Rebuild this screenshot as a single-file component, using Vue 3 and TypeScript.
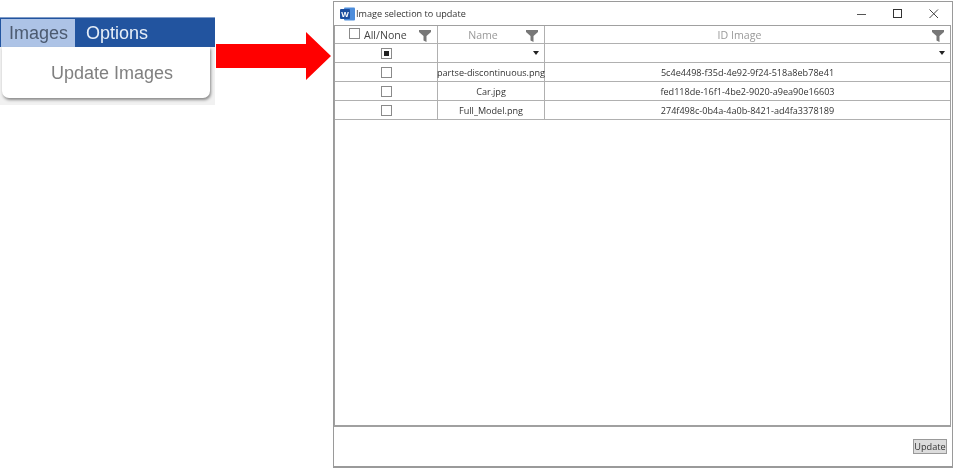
<script setup lang="ts">
interface Row { name: string; id: string }
const rows: Row[] = [
  { name: 'partse-discontinuous.png', id: '5c4e4498-f35d-4e92-9f24-518a8eb78e41' },
  { name: 'Car.jpg', id: 'fed118de-16f1-4be2-9020-a9ea90e16603' },
  { name: 'Full_Model.png', id: '274f498c-0b4a-4a0b-8421-ad4fa3378189' },
]
</script>

<template>
  <div class="page">
    <div class="shot">
      <div class="menubar">
        <div class="menu active">Images</div>
        <div class="menu">Options</div>
      </div>
      <div class="popup">Update Images</div>
    </div>

    <svg class="arrow" width="116" height="50" viewBox="0 0 116 50">
      <path d="M0 12H90V0L115 24L90 48V36H0Z" fill="#ff0000" />
    </svg>

    <div class="window">
      <div class="titlebar">
        <svg class="word" width="15" height="14" viewBox="0 0 15 14">
          <rect x="4" y="0.500" width="11" height="13" rx="1" fill="#4d8ddb" />
          <rect x="0" y="2" width="10" height="10" rx="1" fill="#1d4f9f" />
          <text x="5" y="10" text-anchor="middle" class="word-w">W</text>
        </svg>
        <span class="title">Image selection to update</span>
        <div class="controls">
          <svg width="12" height="12" viewBox="0 0 12 12"><path d="M1 6.500H10" stroke="#555" stroke-width="1" /></svg>
          <svg width="12" height="12" viewBox="0 0 12 12"><rect x="1.500" y="1.500" width="8" height="8" fill="none" stroke="#333" /></svg>
          <svg width="12" height="12" viewBox="0 0 12 12"><path d="M1.500 1.500L10 10M10 1.500L1.500 10" stroke="#444" /></svg>
        </div>
      </div>

      <div class="grid">
        <div class="row head">
          <div class="c c1">
            <span class="box head-box"></span>
            <span class="all">All/None</span>
            <svg class="filter" width="12" height="12" viewBox="0 0 12 12"><path d="M0 0H12V2L7.500 6V12L4.500 10.500V6L0 2Z" fill="#777" /></svg>
          </div>
          <div class="c c2">
            <span class="muted">Name</span>
            <svg class="filter" width="12" height="12" viewBox="0 0 12 12"><path d="M0 0H12V2L7.500 6V12L4.500 10.500V6L0 2Z" fill="#777" /></svg>
          </div>
          <div class="c c3">
            <span class="muted">ID Image</span>
            <svg class="filter" width="12" height="12" viewBox="0 0 12 12"><path d="M0 0H12V2L7.500 6V12L4.500 10.500V6L0 2Z" fill="#777" /></svg>
          </div>
        </div>
        <div class="row">
          <div class="c c1"><span class="box checked"><i></i></span></div>
          <div class="c c2"><span class="caret"></span></div>
          <div class="c c3"><span class="caret"></span></div>
        </div>
        <div v-for="r in rows" :key="r.id" class="row">
          <div class="c c1"><span class="box"></span></div>
          <div class="c c2">{{ r.name }}</div>
          <div class="c c3">{{ r.id }}</div>
        </div>
        <div class="empty"></div>
      </div>

      <div class="footer">
        <button class="update" type="button">Update</button>
      </div>
    </div>
  </div>
</template>

<style>
html, body { margin: 0; background: #fff; }
</style>

<style scoped>
.page {
  width: 953px;
  height: 469px;
  display: flex;
  align-items: flex-start;
  overflow: hidden;
  background: #fff;
  font-family: "Open Sans", "Liberation Sans", sans-serif;
}
.shot {
  width: 215px;
  height: 88px;
  margin-top: 17px;
  flex: none;
  background: #f1f1f1;
  font-family: "Liberation Sans", sans-serif;
}
.menubar {
  height: 30px;
  padding: 1px 0 0 1px;
  box-sizing: border-box;
  display: flex;
  background: #22549f;
  border-top: 1px solid #7f9cc8;
}
.menu {
  padding: 0 9px;
  font-size: 18px;
  line-height: 29px;
  color: #e6eef8;
  filter: blur(0.5px);
}
.menu.active {
  width: 74px;
  box-sizing: border-box;
  padding: 0 0 0 8px;
  background: #adc3e6;
  color: #4c5a70;
  margin-right: 2px;
}
.popup {
  width: 208px;
  height: 51px;
  margin-left: 2px;
  box-sizing: border-box;
  padding: 15px 0 0 49px;
  background: #fff;
  border-radius: 0 0 7px 7px;
  box-shadow: 1px 2px 3px #8a8a8a;
  color: #808080;
  font-size: 18px;
  line-height: 22px;
  filter: blur(0.4px);
}
.arrow {
  flex: none;
  margin: 32px 0 0 1px;
}
.window {
  width: 620px;
  height: 467px;
  margin: 1px 0 0 1px;
  flex: none;
  box-sizing: border-box;
  display: flex;
  flex-direction: column;
  background: #fff;
  border: 1px solid #9a9a9a;
  border-bottom-width: 2px;
  filter: blur(0.3px);
}
.titlebar {
  height: 23px;
  flex: none;
  display: flex;
  align-items: center;
  padding-left: 6px;
}
.word { flex: none; }
.word-w {
  fill: #fff;
  font-size: 8px;
  font-weight: 700;
  font-family: "Liberation Sans", sans-serif;
}
.title {
  margin-left: 1px;
  font-size: 9.100px;
  color: #333;
}
.controls {
  margin-left: auto;
  padding-right: 12px;
  display: flex;
  gap: 24px;
}
.grid {
  flex: 1;
  display: flex;
  flex-direction: column;
  margin-right: 1px;
  border-style: solid;
  border-width: 1px 1px 2px 1px;
  border-color: #a0a0a0;
}
.row {
  height: 19px;
  flex: none;
  box-sizing: border-box;
  display: flex;
  border-bottom: 1px solid #b0b0b0;
}
.row.head { height: 18px; }
.c {
  box-sizing: border-box;
  display: flex;
  align-items: center;
  justify-content: center;
  position: relative;
  font-size: 9.100px;
  color: #333;
  white-space: nowrap;
}
.c1 { width: 103px; border-right: 1px solid #b0b0b0; }
.c2 { width: 107px; border-right: 1px solid #b0b0b0; }
.c3 { flex: 1; }
.head .c { font-size: 10.600px; padding-right: 16px; }
.head .c1 { justify-content: flex-start; padding: 0 0 0 14px; }
.all { margin-left: 4px; color: #444; }
.muted { color: #999; }
.head-box { width: 10px; height: 10px; margin-top: -2px; }
.box {
  width: 9px;
  height: 9px;
  flex: none;
  display: flex;
  align-items: center;
  justify-content: center;
  border: 1px solid #8a8a8a;
  background: #fff;
}
.box i {
  width: 5px;
  height: 5px;
  background: #222;
}
.filter {
  position: absolute;
  right: 6px;
  top: 4px;
}
.caret {
  position: absolute;
  right: 5px;
  top: 7px;
  width: 0;
  height: 0;
  border-left: 3px solid transparent;
  border-right: 3px solid transparent;
  border-top: 4px solid #222;
}
.empty { flex: 1; }
.footer {
  height: 39px;
  flex: none;
  display: flex;
  justify-content: flex-end;
  align-items: flex-start;
  padding: 12px 4px 0 0;
  box-sizing: border-box;
}
.update {
  width: 34px;
  height: 15px;
  padding: 0;
  margin-right: 1px;
  box-sizing: border-box;
  background: #dcdcdc;
  border: 1px solid #999;
  font-family: "Open Sans", "Liberation Sans", sans-serif;
  font-size: 9.200px;
  line-height: 13px;
  color: #333;
}
</style>
